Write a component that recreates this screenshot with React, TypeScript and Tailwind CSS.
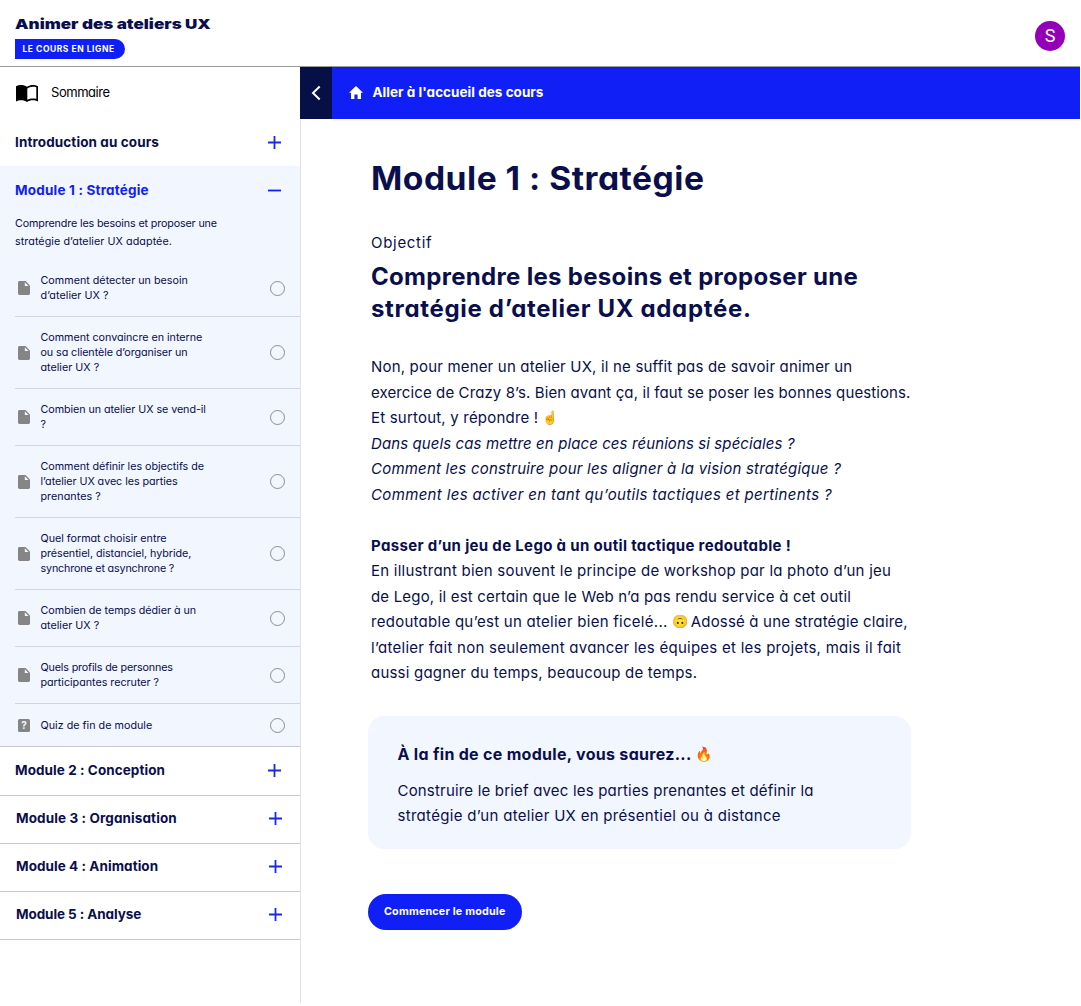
import type { ReactNode } from 'react';

type Line = [text: string, tracking: string];
type Lesson = { lines: Line[]; quiz?: boolean };

const lessons: Lesson[] = [
  { lines: [['Comment détecter un besoin', 'tracking-normal'], ['d’atelier UX ?', 'tracking-[0.05px]']] },
  {
    lines: [
      ['Comment convaincre en interne', 'tracking-[-0.04px]'],
      ['ou sa clientèle d’organiser un', 'tracking-[-0.085px]'],
      ['atelier UX ?', 'tracking-normal'],
    ],
  },
  { lines: [['Combien un atelier UX se vend-il', 'tracking-[-0.07px]'], ['?', 'tracking-normal']] },
  {
    lines: [
      ['Comment définir les objectifs de', 'tracking-[-0.04px]'],
      ['l’atelier UX avec les parties', 'tracking-[-0.06px]'],
      ['prenantes ?', 'tracking-[0.04px]'],
    ],
  },
  {
    lines: [
      ['Quel format choisir entre', 'tracking-[-0.02px]'],
      ['présentiel, distanciel, hybride,', 'tracking-[-0.06px]'],
      ['synchrone et asynchrone ?', 'tracking-[-0.17px]'],
    ],
  },
  { lines: [['Combien de temps dédier à un', 'tracking-[-0.03px]'], ['atelier UX ?', 'tracking-normal']] },
  { lines: [['Quels profils de personnes', 'tracking-[-0.16px]'], ['participantes recruter ?', 'tracking-[-0.02px]']] },
  { lines: [['Quiz de fin de module', 'tracking-[0.01px]']], quiz: true },
];

function Plus() {
  return (
    <svg width="13" height="13" viewBox="0 0 13 13" fill="none" stroke="#1b2be0" strokeWidth="1.8">
      <path d="M0 6.5h13M6.5 0v13" />
    </svg>
  );
}

function Minus() {
  return (
    <svg width="13" height="13" viewBox="0 0 13 13" fill="none" stroke="#1020f5" strokeWidth="1.8">
      <path d="M0 6.5h13" />
    </svg>
  );
}

function FileIcon() {
  return (
    <svg width="12" height="14" viewBox="0 0 12 14">
      <path fill="#858585" d="M1.4 0H7.6L12 4.6V12.6Q12 14 10.6 14H1.4Q0 14 0 12.6V1.4Q0 0 1.4 0Z" />
      <path fill="#f2f6ff" d="M6.8 1.2 10.6 5H6.8Z" />
    </svg>
  );
}

function QuizIcon() {
  return (
    <span className="flex h-[13px] w-3 items-center justify-center rounded-[1.5px] bg-[#858585] text-[10px] leading-none font-bold text-[#f2f6ff]">
      ?
    </span>
  );
}

function LessonRow({ lesson, last }: { lesson: Lesson; last: boolean }) {
  return (
    <li
      className={`ml-[15px] flex items-center pl-[3px] ${last ? 'h-[42px]' : 'border-b-[1.5px] border-[#d3d6df] py-[13px]'}`}
    >
      <span className="w-[22px] shrink-0">{lesson.quiz ? <QuizIcon /> : <FileIcon />}</span>
      <span className="flex-1 pl-[0.5px] text-[10.75px] leading-[15px]">
        {lesson.lines.map(([text, tracking]) => (
          <span key={text} className={`block whitespace-pre ${tracking}`}>
            {text}
          </span>
        ))}
      </span>
      <span className="mr-[15px] size-[15px] shrink-0 rounded-full border border-[#8b8d99]" />
    </li>
  );
}

function ModuleRow({ label, tracking, className }: { label: string; tracking: string; className: string }) {
  return (
    <div className={`flex items-center justify-between border-b border-[#c9c9cc] text-[13.5px] font-bold ${className}`}>
      <span className={`whitespace-pre ${tracking}`}>{label}</span>
      <Plus />
    </div>
  );
}

function P({ t, children, className = '' }: { t: string; children: ReactNode; className?: string }) {
  return <span className={`block h-[25.5px] whitespace-pre ${t} ${className}`}>{children}</span>;
}

export default function App() {
  return (
    <div className="flex h-[1003px] w-[1080px] flex-col bg-white font-['Inter',sans-serif] text-[#0a0f4b] [font-feature-settings:'cv11']">
      <header className="flex h-[67px] shrink-0 justify-between border-b border-[#9a9a9a] pl-[15px]">
        <div className="flex flex-col items-start">
          <h1 className="mt-[14px] origin-left scale-x-[1.24] text-[13.75px] leading-5 font-black whitespace-pre [font-feature-settings:normal]">
            Animer des ateliers UX
          </h1>
          <span className="mt-[5px] flex h-[19.5px] w-[110px] items-center rounded-r-full bg-[#0f1ff5] pt-px pl-[7.500px] text-[8.5px] font-bold tracking-[0.53px] whitespace-pre text-white">
            LE COURS EN LIGNE
          </span>
        </div>
        <span className="mt-[21px] mr-[15px] flex size-[30px] items-center justify-center rounded-full bg-[#9400b8] font-['Roboto'] text-[18px] leading-none text-white">
          S
        </span>
      </header>

      <div className="flex min-h-0 flex-1">
        <aside className="w-[301px] shrink-0 border-r border-[#e1e2e8]">
          <div className="flex h-[51px] items-center pl-4 text-[13px] text-black">
            <svg width="22" height="17" viewBox="0 0 22 17" className="mt-[2px]">
              <path
                d="M11 1.8C9.2.5 7.1 0 5.2 0 3.300 0 1.500.3 0 1.200V16.400C1.600 15.500 3.400 15.200 5.200 15.200 7.300 15.200 9.400 15.700 11 17 12.600 15.700 14.700 15.200 16.800 15.200 18.600 15.200 20.400 15.500 22 16.400V1.200C20.500.3 18.700 0 16.800 0 14.900 0 12.800.5 11 1.800Z"
                fill="#000"
              />
              <path
                d="M20.300 13.800C19.200 13.500 17.900 13.400 16.800 13.400 15 13.400 12.800 13.900 11.300 14.800V3.500C12.800 2.500 15 1.800 16.800 1.800 17.900 1.800 19.300 1.900 20.300 2.200Z"
                fill="#fff"
              />
            </svg>
            <span className="ml-[13px] tracking-[-0.45px]">Sommaire</span>
          </div>

          <div className="flex h-12 items-center justify-between pr-[19px] pl-[15px] text-[13.5px] font-bold">
            <span className="tracking-[0.11px]">Introduction au cours</span>
            <Plus />
          </div>

          <section className="h-[581px] border-b border-[#c9c9cc] bg-[#f2f6ff]">
            <div className="flex h-12 items-center justify-between pr-[19px] pl-[15px] text-[13.5px] font-bold text-[#1020f5]">
              <span className="tracking-[0.19px]">Module 1 : Stratégie</span>
              <Minus />
            </div>
            <p className="pt-px pl-[15px] text-[10.75px] leading-[18px] whitespace-pre">
              <span className="block tracking-[-0.145px]">Comprendre les besoins et proposer une</span>
              <span className="block tracking-[0.06px]">stratégie d’atelier UX adaptée.</span>
            </p>
            <ul className="pt-[9px]">
              {lessons.map((lesson, i) => (
                <LessonRow key={lesson.lines[0][0]} lesson={lesson} last={i === lessons.length - 1} />
              ))}
            </ul>
          </section>

          <ModuleRow label="Module 2 : Conception" tracking="tracking-[0.07px]" className="h-[49px] pr-[19px] pb-px pl-[15px]" />
          <ModuleRow label="Module 3 : Organisation" tracking="tracking-[0.11px]" className="h-12 pr-[18px] pb-[2px] pl-[16px]" />
          <ModuleRow label="Module 4 : Animation" tracking="tracking-[0.06px]" className="h-12 pr-[18px] pb-[2px] pl-[16px]" />
          <ModuleRow label="Module 5 : Analyse" tracking="tracking-[-0.09px]" className="h-12 pr-[18px] pb-[2px] pl-[16px]" />
        </aside>

        <main className="-ml-px min-w-0 flex-1">
          <nav className="flex h-[51.5px] items-center bg-[#0f1ff5] text-[13.5px] font-bold text-white">
            <span className="flex h-full w-[32px] items-center justify-center bg-[#070f47]">
              <svg width="10" height="16" viewBox="0 0 10 16" fill="none" stroke="#fff" strokeWidth="2">
                <path d="M8.700 1.500 2 8l6.700 6.500" />
              </svg>
            </span>
            <svg width="14" height="13" viewBox="0 0 14 13" className="ml-[17px]">
              <path fill="#fff" d="M7 0 14 6.700H12V13H8.600V8.500H5.400V13H2V6.700H0Z" />
            </svg>
            <span className="-mt-[2px] ml-[9.5px] tracking-[0.03px] whitespace-pre">Aller à l'accueil des cours</span>
          </nav>

          <div className="pl-[71px]">
            <h2 className="mt-[40px] w-fit origin-left scale-x-[1.05] text-[32px] leading-10 font-bold tracking-[0.48px] whitespace-pre">
              Module 1 : Stratégie
            </h2>
            <p className="mt-[32px] text-[15px] leading-6 tracking-[0.7px]">Objectif</p>
            <h3 className="mt-[6px] text-[24px] leading-8 font-bold whitespace-pre">
              <span className="block tracking-[0.31px]">Comprendre les besoins et proposer une</span>
              <span className="block tracking-[0.68px]">stratégie d’atelier UX adaptée.</span>
            </h3>

            <div className="mt-[29.5px] text-[15px] leading-[25.5px]">
              <P t="tracking-[0.18px]">Non, pour mener un atelier UX, il ne suffit pas de savoir animer un</P>
              <P t="tracking-[0.108px]">exercice de Crazy 8’s. Bien avant ça, il faut se poser les bonnes questions.</P>
              <P t="tracking-[0.2px]">
                Et surtout, y répondre !<span className="relative -top-px ml-[3.500px] text-[13px] leading-none">☝️</span>
              </P>
              <P t="tracking-[0.1px]" className="italic">Dans quels cas mettre en place ces réunions si spéciales ?</P>
              <P t="tracking-[0.218px]" className="italic">Comment les construire pour les aligner à la vision stratégique ?</P>
              <P t="tracking-[0.349px]" className="italic">Comment les activer en tant qu’outils tactiques et pertinents ?</P>
              <P t="tracking-[0.33px]" className="mt-[25.5px] font-bold">Passer d’un jeu de Lego à un outil tactique redoutable !</P>
              <P t="tracking-[0.23px]">En illustrant bien souvent le principe de workshop par la photo d’un jeu</P>
              <P t="tracking-[0.18px]">de Lego, il est certain que le Web n’a pas rendu service à cet outil</P>
              <P t="tracking-[0.27px]">
                redoutable qu’est un atelier bien ficelé...
                <span className="relative -top-px -mr-[1.5px] ml-[4px] text-[13px] leading-none">🙃</span>
                <span className="tracking-[0.18px]"> Adossé à une stratégie claire,</span>
              </P>
              <P t="tracking-[0.255px]">l’atelier fait non seulement avancer les équipes et les projets, mais il fait</P>
              <P t="tracking-[0.215px]">aussi gagner du temps, beaucoup de temps.</P>
            </div>
          </div>

          <section className="mt-[30px] ml-[68px] h-[133px] w-[543px] rounded-[16px] bg-[#f2f6ff] pt-[25px] pl-[29.5px]">
            <h4 className="text-[16px] leading-[26px] font-bold tracking-[0.3px] whitespace-pre">
              À la fin de ce module, vous saurez... <span className="relative -top-px text-[14px] leading-none">🔥</span>
            </h4>
            <p className="mt-[11px] text-[15px] leading-[25.5px]">
              <P t="tracking-[0.185px]">Construire le brief avec les parties prenantes et définir la</P>
              <P t="tracking-[0.3px]">stratégie d’un atelier UX en présentiel ou à distance</P>
            </p>
          </section>

          <button className="mt-[45px] ml-[67.5px] flex h-[36px] w-[154.5px] items-center justify-center rounded-full bg-[#0f1ff5] pt-[2px] text-[10.75px] font-bold tracking-[0.19px] whitespace-pre text-white">
            Commencer le module
          </button>
        </main>
      </div>
    </div>
  );
}
